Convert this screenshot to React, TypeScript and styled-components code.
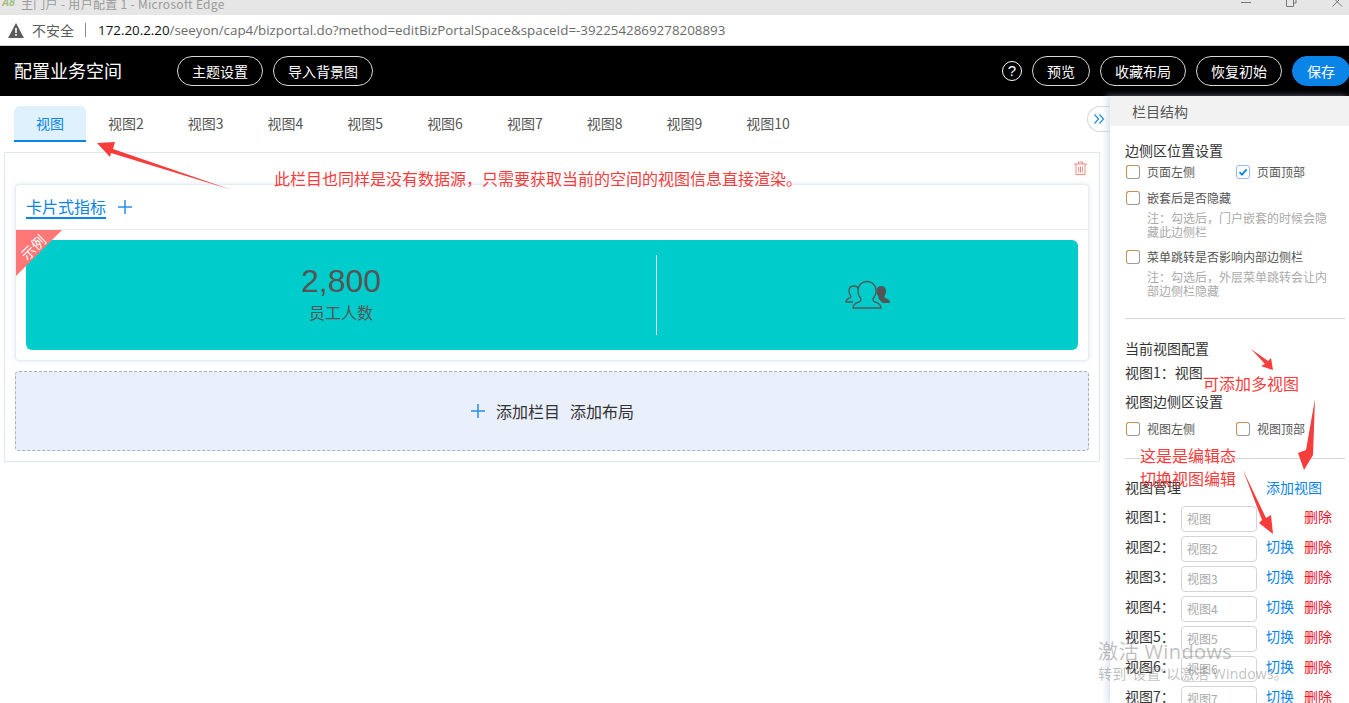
import React from "react";
import styled, { createGlobalStyle } from "styled-components";

const Global = createGlobalStyle`
  html, body { margin: 0; padding: 0; background: #fff; overflow: hidden; }
  body { font-family: "Liberation Sans", "Noto Sans CJK SC", sans-serif; }
  * { box-sizing: border-box; }
`;

const Win = styled.div`
  position: relative;
  width: 1349px;
  height: 703px;
  overflow: hidden;
  display: flex;
  flex-direction: column;
`;
const TitleBar = styled.div`
  height: 15px;
  flex: none;
  background: #e6e6e6;
  overflow: hidden;
  display: flex;
  align-items: flex-start;
  padding-left: 2px;
`;
const AppMark = styled.span`
  font: italic 700 10px/6px "Liberation Sans", sans-serif;
  color: #9fbf7a;
  width: 19px;
`;
const TitleText = styled.span`
  font: 12px/8px "Noto Sans CJK SC", sans-serif;
  color: #9a9a9a;
  letter-spacing: 0.3px;
`;
const WinControls = styled.div`
  margin-left: auto;
  display: flex;
  gap: 35px;
  padding-right: 6px;
`;
const AddressBar = styled.div`
  height: 31px;
  flex: none;
  background: #fff;
  border-bottom: 1px solid #d0d0d0;
  display: flex;
  align-items: center;
  padding-left: 8px;
`;
const Insecure = styled.span`
  font: 14px "Noto Sans CJK SC", sans-serif;
  color: #5c5c5c;
  margin-left: 8px;
`;
const Sep = styled.span`
  width: 1px;
  height: 14px;
  background: #8a8a8a;
  margin: 0 12px 0 11px;
`;
const Url = styled.span`
  font: 13.35px "Open Sans", sans-serif;
  color: #6b6b6b;
  white-space: nowrap;
  b { font-weight: 400; color: #111; }
`;
const Header = styled.header`
  height: 50px;
  flex: none;
  background: #000;
  display: flex;
  align-items: center;
  padding-left: 14px;
  margin-right: -1px;
`;
const HeadTitle = styled.h1`
  margin: -2px 55px 0 0;
  font: 400 18px "Noto Sans CJK SC", sans-serif;
  color: #fff;
`;
const Pill = styled.button<{ $primary?: boolean; $w: number }>`
  width: ${(p) => p.$w}px;
  height: 30px;
  border-radius: 15px;
  border: 1px solid ${(p) => (p.$primary ? "#0a84e6" : "#d8d8d8")};
  background: ${(p) => (p.$primary ? "#0a84e6" : "#000")};
  color: #fff;
  font: 14px "Noto Sans CJK SC", sans-serif;
  padding: 0;
  margin-right: 10px;
  &:last-child { margin-right: 0; }
`;
const HeadRight = styled.div`
  margin-left: auto;
  display: flex;
  align-items: center;
`;
const Help = styled.span`
  width: 20px;
  height: 20px;
  border: 1.5px solid #fff;
  border-radius: 50%;
  margin-right: 10px;
  color: #fff;
  font: 400 15px/17px "Liberation Sans", sans-serif;
  text-align: center;
`;
const Body = styled.div`
  flex: 1;
  display: flex;
  min-height: 0;
`;
const Main = styled.main`
  position: relative;
  width: 1110px;
  flex: none;
`;
const Tabs = styled.nav`
  display: flex;
  margin: 10px 0 0 14px;
  height: 36px;
`;
const Tab = styled.div<{ $on?: boolean }>`
  padding: 0 22px;
  height: 36px;
  font: 14px/35px "Noto Sans CJK SC", sans-serif;
  color: ${(p) => (p.$on ? "#0a84e6" : "#555")};
  background: ${(p) => (p.$on ? "#dff1fd" : "transparent")};
  border-radius: 6px 6px 0 0;
  border-bottom: 2px solid ${(p) => (p.$on ? "#0a84e6" : "transparent")};
`;
const Collapse = styled.div`
  position: absolute;
  top: 10px;
  right: 0;
  width: 23px;
  height: 26px;
  border: 1px solid #d8d8d8;
  border-right: 0;
  border-radius: 13px 0 0 13px;
  background: #fff;
  display: flex;
  align-items: center;
  justify-content: center;
`;
const Canvas = styled.section`
  position: relative;
  margin: 10px 10px 0 4px;
  padding: 31px 10px 10px;
  border: 1px solid #dce8f5;
`;
const Trash = styled.span`
  position: absolute;
  top: 8px;
  right: 12px;
  display: flex;
`;
const Card = styled.div`
  position: relative;
  height: 177px;
  border: 1px solid #e3edf6;
  border-radius: 4px;
  box-shadow: 0 0 4px rgba(190, 210, 230, 0.5);
  background: #fff;
`;
const CardHead = styled.div`
  height: 45px;
  border-bottom: 1px solid #e3edf6;
  display: flex;
  align-items: center;
  padding-left: 10px;
  gap: 11px;
`;
const CardTab = styled.span`
  font: 16px/21px "Noto Sans CJK SC", sans-serif;
  color: #0a84e6;
  border-bottom: 2px solid #0a84e6;
`;
const Ribbon = styled.div`
  position: absolute;
  left: 0;
  top: 45px;
  width: 46px;
  height: 46px;
  background: #ff7777;
  clip-path: polygon(0 0, 100% 0, 0 100%);
  z-index: 1;
`;
const RibbonText = styled.span`
  position: absolute;
  left: 3px;
  top: 8px;
  transform: rotate(-45deg);
  font: 14px/18px "Noto Sans CJK SC", sans-serif;
  color: #fff;
`;
const Teal = styled.div`
  margin: 10px 10px 0;
  height: 110px;
  background: #00cccb;
  border-radius: 6px;
  display: flex;
  align-items: center;
`;
const Metric = styled.div`
  width: 631px;
  height: 80px;
  border-right: 1px solid #dff;
  display: flex;
  flex-direction: column;
  align-items: center;
`;
const Value = styled.div`
  font: 32px/37px "Liberation Sans", sans-serif;
  color: #555;
  margin-top: 8px;
`;
const Caption = styled.div`
  font: 16px/20px "Noto Sans CJK SC", sans-serif;
  color: #555;
  margin-top: 2px;
`;
const IconCell = styled.div`
  flex: 1;
  display: flex;
  justify-content: center;
`;
const AddBox = styled.div`
  margin-top: 10px;
  height: 80px;
  border: 1px dashed #aab0bb;
  border-radius: 4px;
  background: #e9effb;
  display: flex;
  align-items: center;
  justify-content: center;
  gap: 10px;
  font: 16px "Noto Sans CJK SC", sans-serif;
  color: #333;
`;
const Side = styled.aside`
  width: 239px;
  flex: none;
  background: #fff;
  box-shadow: -3px 0 6px rgba(190, 200, 225, 0.55);
  z-index: 2;
  font: 14px "Noto Sans CJK SC", sans-serif;
  color: #333;
`;
const SideHead = styled.div`
  height: 30px;
  background: #f2f2f2;
  padding-left: 22px;
  font: 14px/30px "Noto Sans CJK SC", sans-serif;
  color: #555;
`;
const SideBody = styled.div`
  padding: 15px 4px 0 15px;
`;
const Heading = styled.div<{ $top?: number }>`
  font: 14px/18px "Noto Sans CJK SC", sans-serif;
  color: #333;
  margin-top: ${(p) => p.$top ?? 0}px;
`;
const CheckRow = styled.div<{ $top: number }>`
  display: flex;
  align-items: center;
  margin-top: ${(p) => p.$top}px;
  height: 16px;
  padding-left: 1px;
`;
const CheckLabel = styled.label<{ $w?: number }>`
  display: flex;
  align-items: center;
  gap: 7px;
  width: ${(p) => (p.$w ? p.$w + "px" : "auto")};
  font: 12px/16px "Noto Sans CJK SC", sans-serif;
  color: #555;
`;
const Box = styled.span<{ $on?: boolean }>`
  width: 14px;
  height: 14px;
  flex: none;
  border: 1.5px solid;
  border-color: ${(p) => (p.$on ? "#9db4f0" : "#c98f4e #9a9a9a #9a9a9a #c98f4e")};
  border-radius: 3px;
  background: #fff;
  display: flex;
  align-items: center;
  justify-content: center;
`;
const Note = styled.p`
  margin: 5px 0 0 22px;
  width: 182px;
  font: 12px/14px "Noto Sans CJK SC", sans-serif;
  color: #aaa;
`;
const Rule = styled.hr<{ $top: number; $bottom: number }>`
  border: 0;
  height: 1px;
  background: #d5d5d5;
  margin: ${(p) => p.$top}px 0 ${(p) => p.$bottom}px;
`;
const ManageHead = styled.div`
  display: flex;
  align-items: center;
  height: 18px;
  font: 14px/18px "Noto Sans CJK SC", sans-serif;
  margin-bottom: 10px;
`;
const RowLabel = styled.span`
  width: 56px;
  flex: none;
  font: 14px "Noto Sans CJK SC", sans-serif;
`;
const Field = styled.div`
  width: 76px;
  height: 26px;
  border: 1px solid #d5d5d5;
  border-radius: 4px;
  font: 12px/24px "Noto Sans CJK SC", sans-serif;
  color: #aaa;
  padding-left: 5px;
  flex: none;
`;
const Link = styled.span<{ $red?: boolean }>`
  font: 14px "Noto Sans CJK SC", sans-serif;
  color: ${(p) => (p.$red ? "#f5132a" : "#0a84e6")};
  width: 38px;
  flex: none;
`;
const Row = styled.div`
  display: flex;
  align-items: center;
  height: 26px;
  margin-bottom: 4px;
  ${RowLabel}, ${Link} { padding-bottom: 6px; }
`;
const Switch = styled(Link)`
  margin-left: 9px;
`;
const AddView = styled(Link)`
  margin-left: 85px;
  width: auto;
`;
const Gap = styled.span`
  width: 38px;
  flex: none;
  margin-left: 9px;
`;
const Anno = styled.div<{ $x: number; $y: number }>`
  position: absolute;
  left: ${(p) => p.$x}px;
  top: ${(p) => p.$y}px;
  font: 16px/22px "Noto Sans CJK SC", sans-serif;
  color: #f73c3c;
  white-space: nowrap;
  z-index: 5;
`;
const Overlay = styled.svg`
  position: absolute;
  left: 0;
  top: 0;
  z-index: 5;
  pointer-events: none;
`;
const Mark = styled.div`
  position: absolute;
  left: 1098px;
  top: 638px;
  z-index: 6;
  color: rgba(120, 120, 120, 0.48);
  pointer-events: none;
  white-space: nowrap;
`;
const MarkBig = styled.div`
  font: 20px/28px "Open Sans", "Noto Sans CJK SC", sans-serif;
  letter-spacing: 0.4px;
`;
const MarkSmall = styled.div`
  font: 14px/20px "Open Sans", "Noto Sans CJK SC", sans-serif;
  margin-top: -2px;
  letter-spacing: 0.2px;
`;

const Check = ({ on }: { on?: boolean }) => (
  <Box $on={on}>
    {on && (
      <svg width="10" height="10" viewBox="0 0 10 10">
        <path d="M1.5 5.2 4 7.6 8.6 2.4" fill="none" stroke="#0a84e6" strokeWidth="1.8" />
      </svg>
    )}
  </Box>
);

const People = () => (
  <svg width="46" height="30" viewBox="0 0 46 30">
    <g fill="none" stroke="#555" strokeWidth="1.3">
      <path d="M8 28c0-4 3-5 7-6.500 1-.5 1-2 1-3-2-2-3-5-3-8C13 5 17 1.500 22 1.500s9 3.500 9 9c0 3-1 6-3 8 0 1 0 2.500 1 3 4 1.500 7 2.500 7 6.500z" />
      <path d="M8 22H1c0-3 2-3 4.500-4.500.5-.5.5-1 0-2-1-1-1.500-3-1.500-4.500C4 8 6 6 9 6c2 0 3.500 1 4.300 2.500" />
    </g>
    <path d="M36 6c-2.500 0-4.500 2-4.500 5 0 2 .8 4 2 5.500 0 1-.5 1.500 0 2l4 4.500h7.500c0-3-2-4-5-5-.5-.5-.5-1-.5-2 1-1.500 1.500-3.500 1.500-5 0-3-2-5-4.500-5z" fill="#555" />
  </svg>
);

const Plus = () => (
  <svg width="16" height="16" viewBox="0 0 16 16">
    <path d="M8 1v14M1 8h14" stroke="#2b8fe8" strokeWidth="1.5" />
  </svg>
);

const tabs = ["视图", "视图2", "视图3", "视图4", "视图5", "视图6", "视图7", "视图8", "视图9", "视图10"];
const rows = [
  ["视图1：", "视图"],
  ["视图2：", "视图2"],
  ["视图3：", "视图3"],
  ["视图4：", "视图4"],
  ["视图5：", "视图5"],
  ["视图6：", "视图6"],
  ["视图7：", "视图7"],
];

export default function App() {
  return (
    <Win>
      <Global />
      <TitleBar>
        <AppMark>A8</AppMark>
        <TitleText>主门户 - 用户配置 1 - Microsoft Edge</TitleText>
        <WinControls>
          <svg width="10" height="10" viewBox="0 0 10 10">
            <path d="M0 2.500h10" stroke="#777" />
          </svg>
          <svg width="11" height="10" viewBox="0 0 11 10">
            <path d="M.5-2h7v8.500h-7zM7.500 3h2.500v-5" fill="none" stroke="#777" />
          </svg>
          <svg width="11" height="10" viewBox="0 0 11 10">
            <path d="M.5-3 10 6.500M10-3 .5 6.500" fill="none" stroke="#777" />
          </svg>
        </WinControls>
      </TitleBar>
      <AddressBar>
        <svg width="16" height="15" viewBox="0 0 16 15">
          <path d="M8 0 16 15H0z" fill="#5c5c5c" />
          <path d="M7.200 5h1.600v5H7.200zM7.200 11h1.600v1.800H7.200z" fill="#fff" />
        </svg>
        <Insecure>不安全</Insecure>
        <Sep />
        <Url>
          <b>172.20.2.20</b>/seeyon/cap4/bizportal.do?method=editBizPortalSpace&amp;spaceId=-3922542869278208893
        </Url>
      </AddressBar>
      <Header>
        <HeadTitle>配置业务空间</HeadTitle>
        <Pill $w={86}>主题设置</Pill>
        <Pill $w={100}>导入背景图</Pill>
        <HeadRight>
          <Help>?</Help>
          <Pill $w={58}>预览</Pill>
          <Pill $w={86}>收藏布局</Pill>
          <Pill $w={86}>恢复初始</Pill>
          <Pill $w={58} $primary>
            保存
          </Pill>
        </HeadRight>
      </Header>
      <Body>
        <Main>
          <Tabs>
            {tabs.map((t, i) => (
              <Tab key={t} $on={i === 0}>
                {t}
              </Tab>
            ))}
          </Tabs>
          <Collapse>
            <svg width="12" height="12" viewBox="0 0 12 12">
              <path d="M1.500 1.500 5.500 6l-4 4.500M6.500 1.500l4 4.500-4 4.500" fill="none" stroke="#2b8fe8" strokeWidth="1.3" />
            </svg>
          </Collapse>
          <Canvas>
            <Trash>
              <svg width="13" height="14" viewBox="0 0 13 14">
                <path d="M0 3h13M4.500 3V1h4v2M2 3v10.500h9V3M4.700 5.500v6M6.500 5.500v6M8.300 5.500v6" fill="none" stroke="#f08a80" />
              </svg>
            </Trash>
            <Card>
              <CardHead>
                <CardTab>卡片式指标</CardTab>
                <Plus />
              </CardHead>
              <Ribbon>
                <RibbonText>示例</RibbonText>
              </Ribbon>
              <Teal>
                <Metric>
                  <Value>2,800</Value>
                  <Caption>员工人数</Caption>
                </Metric>
                <IconCell>
                  <People />
                </IconCell>
              </Teal>
            </Card>
            <AddBox>
              <Plus />
              <span>添加栏目</span>
              <span>添加布局</span>
            </AddBox>
          </Canvas>
        </Main>
        <Side>
          <SideHead>栏目结构</SideHead>
          <SideBody>
            <Heading>边侧区位置设置</Heading>
            <CheckRow $top={5}>
              <CheckLabel $w={110}>
                <Check />
                页面左侧
              </CheckLabel>
              <CheckLabel>
                <Check on />
                页面顶部
              </CheckLabel>
            </CheckRow>
            <CheckRow $top={10}>
              <CheckLabel>
                <Check />
                嵌套后是否隐藏
              </CheckLabel>
            </CheckRow>
            <Note>注：勾选后，门户嵌套的时候会隐藏此边侧栏</Note>
            <CheckRow $top={10}>
              <CheckLabel>
                <Check />
                菜单跳转是否影响内部边侧栏
              </CheckLabel>
            </CheckRow>
            <Note>注：勾选后，外层菜单跳转会让内部边侧栏隐藏</Note>
            <Rule $top={20} $bottom={20} />
            <Heading>当前视图配置</Heading>
            <Heading $top={6}>视图1：视图</Heading>
            <Heading $top={11}>视图边侧区设置</Heading>
            <CheckRow $top={11}>
              <CheckLabel $w={110}>
                <Check />
                视图左侧
              </CheckLabel>
              <CheckLabel>
                <Check />
                视图顶部
              </CheckLabel>
            </CheckRow>
            <Rule $top={21} $bottom={19} />
            <ManageHead>
              <RowLabel>视图管理</RowLabel>
              <AddView>添加视图</AddView>
            </ManageHead>
            {rows.map(([l, v], i) => (
              <Row key={l}>
                <RowLabel>{l}</RowLabel>
                <Field>{v}</Field>
                {i === 0 ? <Gap /> : <Switch>切换</Switch>}
                <Link $red>删除</Link>
              </Row>
            ))}
          </SideBody>
        </Side>
      </Body>

      <Anno $x={274} $y={167}>
        此栏目也同样是没有数据源，只需要获取当前的空间的视图信息直接渲染。
      </Anno>
      <Anno $x={1203} $y={372}>可添加多视图</Anno>
      <Anno $x={1140} $y={444}>这是是编辑态</Anno>
      <Anno $x={1140} $y={467}>切换视图编辑</Anno>
      <Overlay width="1349" height="703" viewBox="0 0 1349 703">
        <g fill="#f73c3c">
          <polygon points="97,143 115,142 113,149 232,190 111,153 110,157" />
          <polygon points="1251,349 1268,361 1271,358 1273,370 1261,366 1265,364" />
          <polygon points="1315,399 1313,455 1304,470 1298,453 1306,450" />
          <polygon points="1243,470 1266,518 1271,515 1273,534 1259,523 1262,520" />
        </g>
      </Overlay>
      <Mark>
        <MarkBig>激活 Windows</MarkBig>
        <MarkSmall>转到"设置"以激活 Windows。</MarkSmall>
      </Mark>
    </Win>
  );
}
